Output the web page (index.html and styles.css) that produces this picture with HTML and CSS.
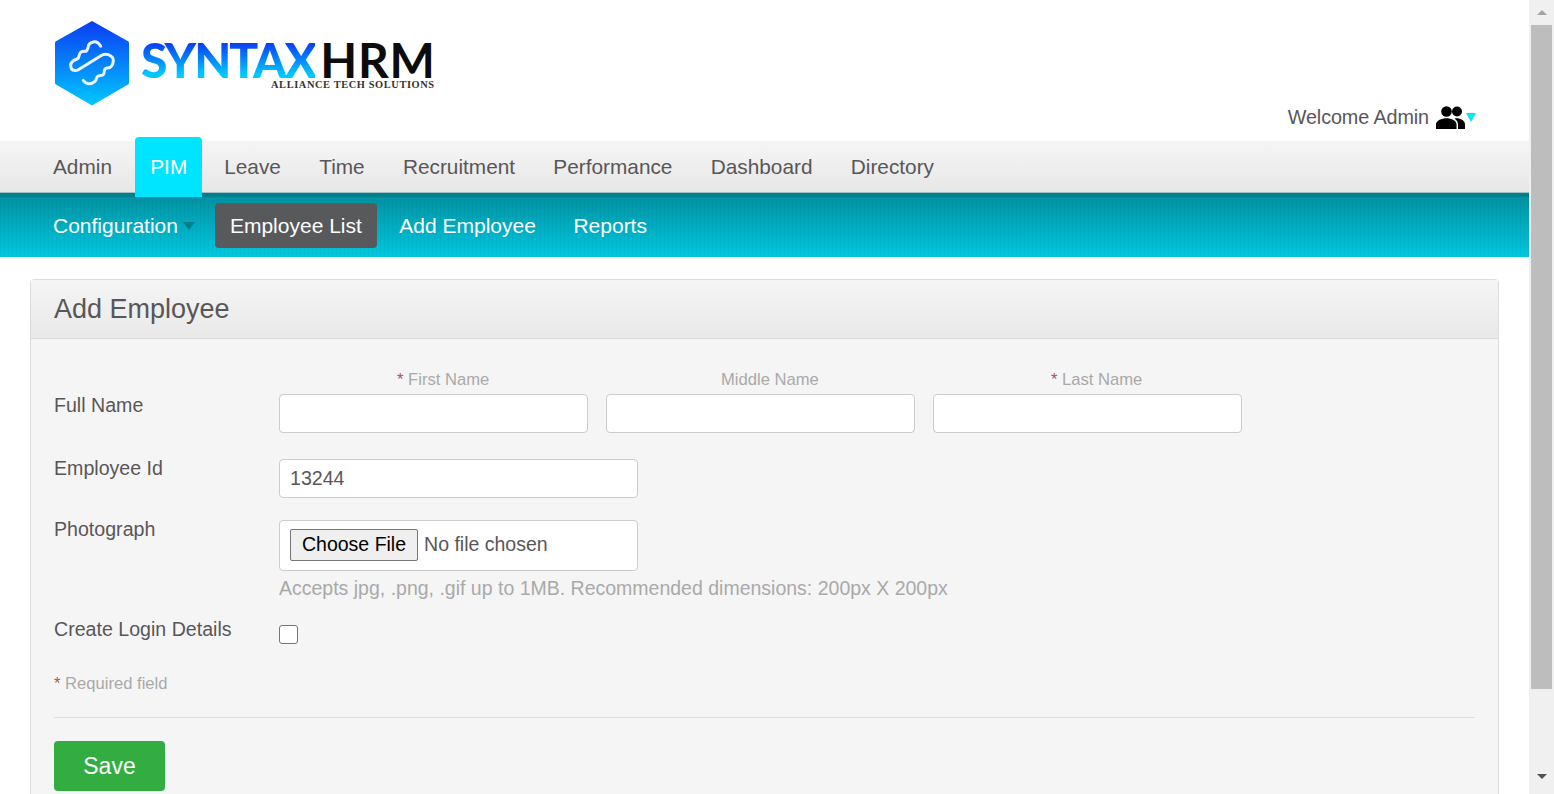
FILE: index.html
```html
<!DOCTYPE html>
<html lang="en">
<head>
<meta charset="utf-8">
<title>Add Employee</title>
<link rel="stylesheet" href="styles.css">
</head>
<body>
<div class="page">
  <header class="top">
    <div class="logo">
      <svg class="logo-mark" viewBox="0 0 74 85" width="74" height="85" aria-hidden="true">
        <defs><linearGradient id="hex" x1="0" y1="0" x2="0" y2="1"><stop offset="0" stop-color="#0a3cf5"/><stop offset="1" stop-color="#00c8ff"/></linearGradient></defs>
        <path d="M37 0 L73.5 20.5 Q74 21 74 22 V62 Q74 63 73 63.5 L37 84.5 L1 63.5 Q0 63 0 62 V22 Q0 21 .5 20.5 Z" fill="url(#hex)"/>
        <path d="M45.7 25.3 C43.5 21.5 40.5 20.5 38.3 21 C35 21.8 33.5 24 33.3 25.3 C32.8 28 32 29.8 31 30.3 C29 30.2 26.8 30.2 25.7 31.3 C24.5 32.5 24 35 23.3 37 C22 38.8 19.8 38.5 18.3 39.7 C16.5 41 15.5 43 15.7 44.7 C16 47.5 17.2 49.3 19 49.3 C20.8 49.7 22 49.5 23.3 48.7 L46.7 34.3 C49 33 51.5 33 53.3 33.7 C56.5 35 58.5 37.5 58.3 39.7 C58 43 57 45.5 55 46.3 C53 47.2 51 47 50 48 C49 49.2 49.5 52.5 48.3 53.7 C47 55 44 54.2 42.7 55.3 C41.2 56.5 41.5 59 40 60.3 C38 62 35.5 63 33.3 62.7 C31 62.4 29.5 61 28.3 59.3" fill="none" stroke="#eaf4ff" stroke-width="3" stroke-linecap="round" stroke-linejoin="round"/>
      </svg>
      <div class="logo-text">
        <div class="logo-name"><span class="logo-syntax">SYNTAX</span><span class="logo-hrm">HRM</span></div>
        <div class="logo-sub">ALLIANCE TECH SOLUTIONS</div>
      </div>
    </div>
    <div class="welcome">
      <span>Welcome Admin</span>
      <svg class="people" viewBox="0 0 29 23" width="29" height="23" aria-hidden="true">
        <circle cx="10.5" cy="5.5" r="5.3" fill="#000"/>
        <circle cx="21" cy="5.5" r="5" fill="#000"/>
        <path fill="#000" d="M0 23 V18.5 C0 14.5 6 12.3 10.5 12.3 C15 12.3 20.5 14.5 20.5 18.5 V23 Z"/>
        <path fill="#000" d="M22 23 V18.5 C22 16 20.5 13.8 18.5 12.5 C23 11.5 29 14 29 18.5 V23 Z"/>
      </svg>
      <span class="caret-cyan"></span>
    </div>
  </header>

  <nav class="mainnav">
    <a>Admin</a>
    <a class="active">PIM</a>
    <a>Leave</a>
    <a>Time</a>
    <a>Recruitment</a>
    <a>Performance</a>
    <a>Dashboard</a>
    <a>Directory</a>
  </nav>

  <nav class="subnav">
    <a class="has-caret">Configuration<span class="caret-teal"></span></a>
    <a class="current">Employee List</a>
    <a>Add Employee</a>
    <a>Reports</a>
  </nav>

  <main class="content">
    <section class="panel">
      <h1 class="panel-head">Add Employee</h1>
      <form class="panel-body">
        <div class="row row-name">
          <label class="lbl lbl-name">Full Name</label>
          <div class="names">
            <div class="name-col"><span class="hint hint-first"><em>*</em> First Name</span><input class="field" type="text"></div>
            <div class="name-col"><span class="hint hint-mid">Middle Name</span><input class="field" type="text"></div>
            <div class="name-col"><span class="hint hint-last"><em>*</em> Last Name</span><input class="field" type="text"></div>
          </div>
        </div>
        <div class="row row-id">
          <label class="lbl">Employee Id</label>
          <input class="field field-wide" type="text" value="13244">
        </div>
        <div class="row row-photo">
          <label class="lbl">Photograph</label>
          <div>
            <div class="file-box"><span class="file-btn">Choose File</span><span class="file-none">No file chosen</span></div>
            <p class="accepts">Accepts jpg, .png, .gif up to 1MB. Recommended dimensions: 200px X 200px</p>
          </div>
        </div>
        <div class="row row-login">
          <label class="lbl">Create Login Details</label>
          <span class="check"></span>
        </div>
        <p class="required"><em>*</em> Required field</p>
        <hr class="rule">
        <button class="save" type="button">Save</button>
      </form>
    </section>
  </main>
</div>
<div class="scrollbar" aria-hidden="true">
  <span class="sb-up"></span>
  <span class="sb-thumb"></span>
  <span class="sb-down"></span>
</div>
</body>
</html>
```

FILE: styles.css
```css
* { box-sizing: border-box; }
html, body { height: 794px; overflow: hidden; }
body {
  margin: 0;
  display: flex;
  background: #fff;
  color: #5a5658;
  font-family: "Liberation Sans", Arial, sans-serif;
}
.page { flex: 1; min-width: 0; height: 794px; overflow: hidden; }

/* header */
.top {
  height: 141px;
  display: flex;
  justify-content: space-between;
  align-items: flex-start;
  padding: 21px 54px 0 55px;
}
.logo { display: flex; }
.logo-text { margin-left: 12px; padding-top: 20px; width: 300px; }
.logo-name { display: flex; height: 37px; font-family: Lato, sans-serif; line-height: 37px; white-space: nowrap; }
.logo-syntax {
  font-size: 48px;
  font-weight: 900;
  letter-spacing: -2px;
  background: linear-gradient(#0a3cf5 5%, #00c8ff 90%);
  -webkit-background-clip: text;
  background-clip: text;
  color: transparent;
}
.logo-hrm { color: #0c0c0c; font-weight: 700; letter-spacing: .7px; margin-left: 5px; font-size: 48px; }
.logo-sub {
  margin: 2px 0 0 130px;
  font-family: "Liberation Serif", serif;
  font-size: 10.4px;
  line-height: 10px;
  font-weight: 700;
  letter-spacing: .6px;
  white-space: nowrap;
  color: #333;
}
.welcome { display: flex; align-items: center; margin-top: 80px; font-size: 19.8px; line-height: 32px; color: #5a5658; letter-spacing: -.1px; }
.people { margin-left: 7px; }
.caret-cyan { width: 0; height: 0; border: 5px solid transparent; border-top: 9px solid #00e5ff; border-bottom: 0; margin: 0 -1px 0 1px; }

/* main nav */
.mainnav {
  height: 52px;
  display: flex;
  padding-left: 38px;
  background: linear-gradient(#f5f5f5, #e7e7e7);
  border-bottom: 1px solid #9dc0c5;
  font-size: 20.8px;
}
.mainnav a { display: block; padding: 13px 15px 0; line-height: 25px; margin-right: 8.3px; color: #5a5658; }
.mainnav a.active {
  height: 60px;
  margin: -4px 7px 0 0;
  padding: 17px 15px 0;
  background: #00e5ff;
  color: #fff;
  border-radius: 4px 4px 0 0;
  position: relative;
  z-index: 1;
}

/* sub nav */
.subnav {
  height: 64px;
  display: flex;
  align-items: center;
  padding: 0 0 0 38px;
  border-top: 4px solid #007f8e;
  background-color: #00bcd0;
  background-image:
    repeating-linear-gradient(90deg, rgba(0,0,0,.03) 0 1px, rgba(0,0,0,0) 1px 4px),
    linear-gradient(#008f9f, #00c8e0);
  background-origin: border-box;
  font-size: 21px;
  color: #fff;
}
.subnav a { display: flex; align-items: center; height: 45px; padding: 2px 15px 0; margin-top: -4px; margin-right: 7.5px; white-space: nowrap; }
.subnav a.has-caret { padding-right: 0; margin-right: 20px; }
.subnav a.current { background: #58595b; border-radius: 4px; margin-right: 7.5px; }
.caret-teal { width: 0; height: 0; margin: 0 0 0 5px; border: 6px solid transparent; border-top: 8px solid #007d8c; border-bottom: 0; }

/* panel */
.content { padding: 22px 30px 0; }
.panel { border: 1px solid #dcdcdc; border-radius: 4px 4px 0 0; background: #f5f5f5; }
.panel-head {
  margin: 0;
  height: 59px;
  padding: 0 23px;
  font-size: 27px;
  font-weight: 400;
  line-height: 59px;
  color: #5a5658;
  background: linear-gradient(#f5f5f5, #e9e9e9);
  border-bottom: 1px solid #dcdcdc;
}
.panel-body { padding: 0 23px 30px; }
.row { display: grid; grid-template-columns: 225px 1fr; }
.lbl { font-size: 19.6px; line-height: 24px; color: #5a5658; }
.row-name { padding-top: 31px; height: 120px; }
.lbl-name { padding-top: 23px; }
.names { display: flex; gap: 18px; }
.name-col { width: 309px; display: flex; flex-direction: column; }
.hint { display: block; height: 24px; font-size: 16.6px; line-height: 19px; color: #aaa9a9; white-space: nowrap; }
.hint em, .required em { font-style: normal; color: #a9545b; }
.hint-first { padding-left: 118px; }
.hint-mid { padding-left: 115px; }
.hint-last { padding-left: 118px; }
.field {
  display: block;
  width: 100%;
  height: 39px;
  padding: 0 10px;
  border: 1px solid #ccc;
  border-radius: 4px;
  background: #fff;
  font: 19.6px "Liberation Sans", Arial, sans-serif;
  color: #5a5658;
  outline: 0;
}
.field-wide { width: 359px; }
.row-id { height: 61px; align-items: start; }
.row-id .lbl { margin-top: -3px; }
.row-photo { height: 100px; }
.row-photo .lbl { margin-top: -3px; }
.file-box {
  width: 359px;
  height: 51px;
  padding: 7px 10px 9px;
  display: flex;
  align-items: center;
  background: #fff;
  border: 1px solid #ccc;
  border-radius: 4px;
}
.file-btn {
  height: 32px;
  padding: 0 11px;
  background: #efefef;
  border: 1px solid #767676;
  border-radius: 2px;
  font-size: 19.5px;
  line-height: 28px;
  color: #000;
  white-space: nowrap;
}
.file-none { margin-left: 6px; font-size: 19.5px; color: #5a5658; }
.accepts { margin: 5px 0 0; font-size: 19.5px; line-height: 24px; color: #aaa9a9; white-space: nowrap; }
.check { display: block; width: 19px; height: 19px; margin-top: 5px; background: #fff; border: 1px solid #767676; border-radius: 3px; }
.row-login { height: 54px; }
.row-login .lbl { margin-top: -3px; }
.required { margin: 0; font-size: 16.6px; line-height: 20px; color: #aaa9a9; }
.rule { margin: 23px 0 23px; border: 0; border-top: 1px solid #dcdcdc; height: 0; }
.save {
  display: block;
  width: 111px;
  height: 50px;
  padding: 0;
  border: 0;
  border-radius: 4px;
  background: #33ad41;
  color: #fff;
  font: 23px "Liberation Sans", Arial, sans-serif;
}

/* scrollbar */
.scrollbar { flex: 0 0 25px; height: 794px; background: #f0f0f0; padding: 0 2px; display: flex; flex-direction: column; align-items: center; }
.sb-up { flex: none; width: 0; height: 0; margin-top: 10px; margin-bottom: 10px; border: 5.5px solid transparent; border-bottom: 5px solid #a3a3a3; border-top: 0; }
.sb-thumb { flex: none; width: 21px; height: 664px; background: #bdbdbd; }
.sb-down { flex: none; width: 0; height: 0; margin-top: 85px; border: 5.5px solid transparent; border-top: 5px solid #505050; border-bottom: 0; }
```
